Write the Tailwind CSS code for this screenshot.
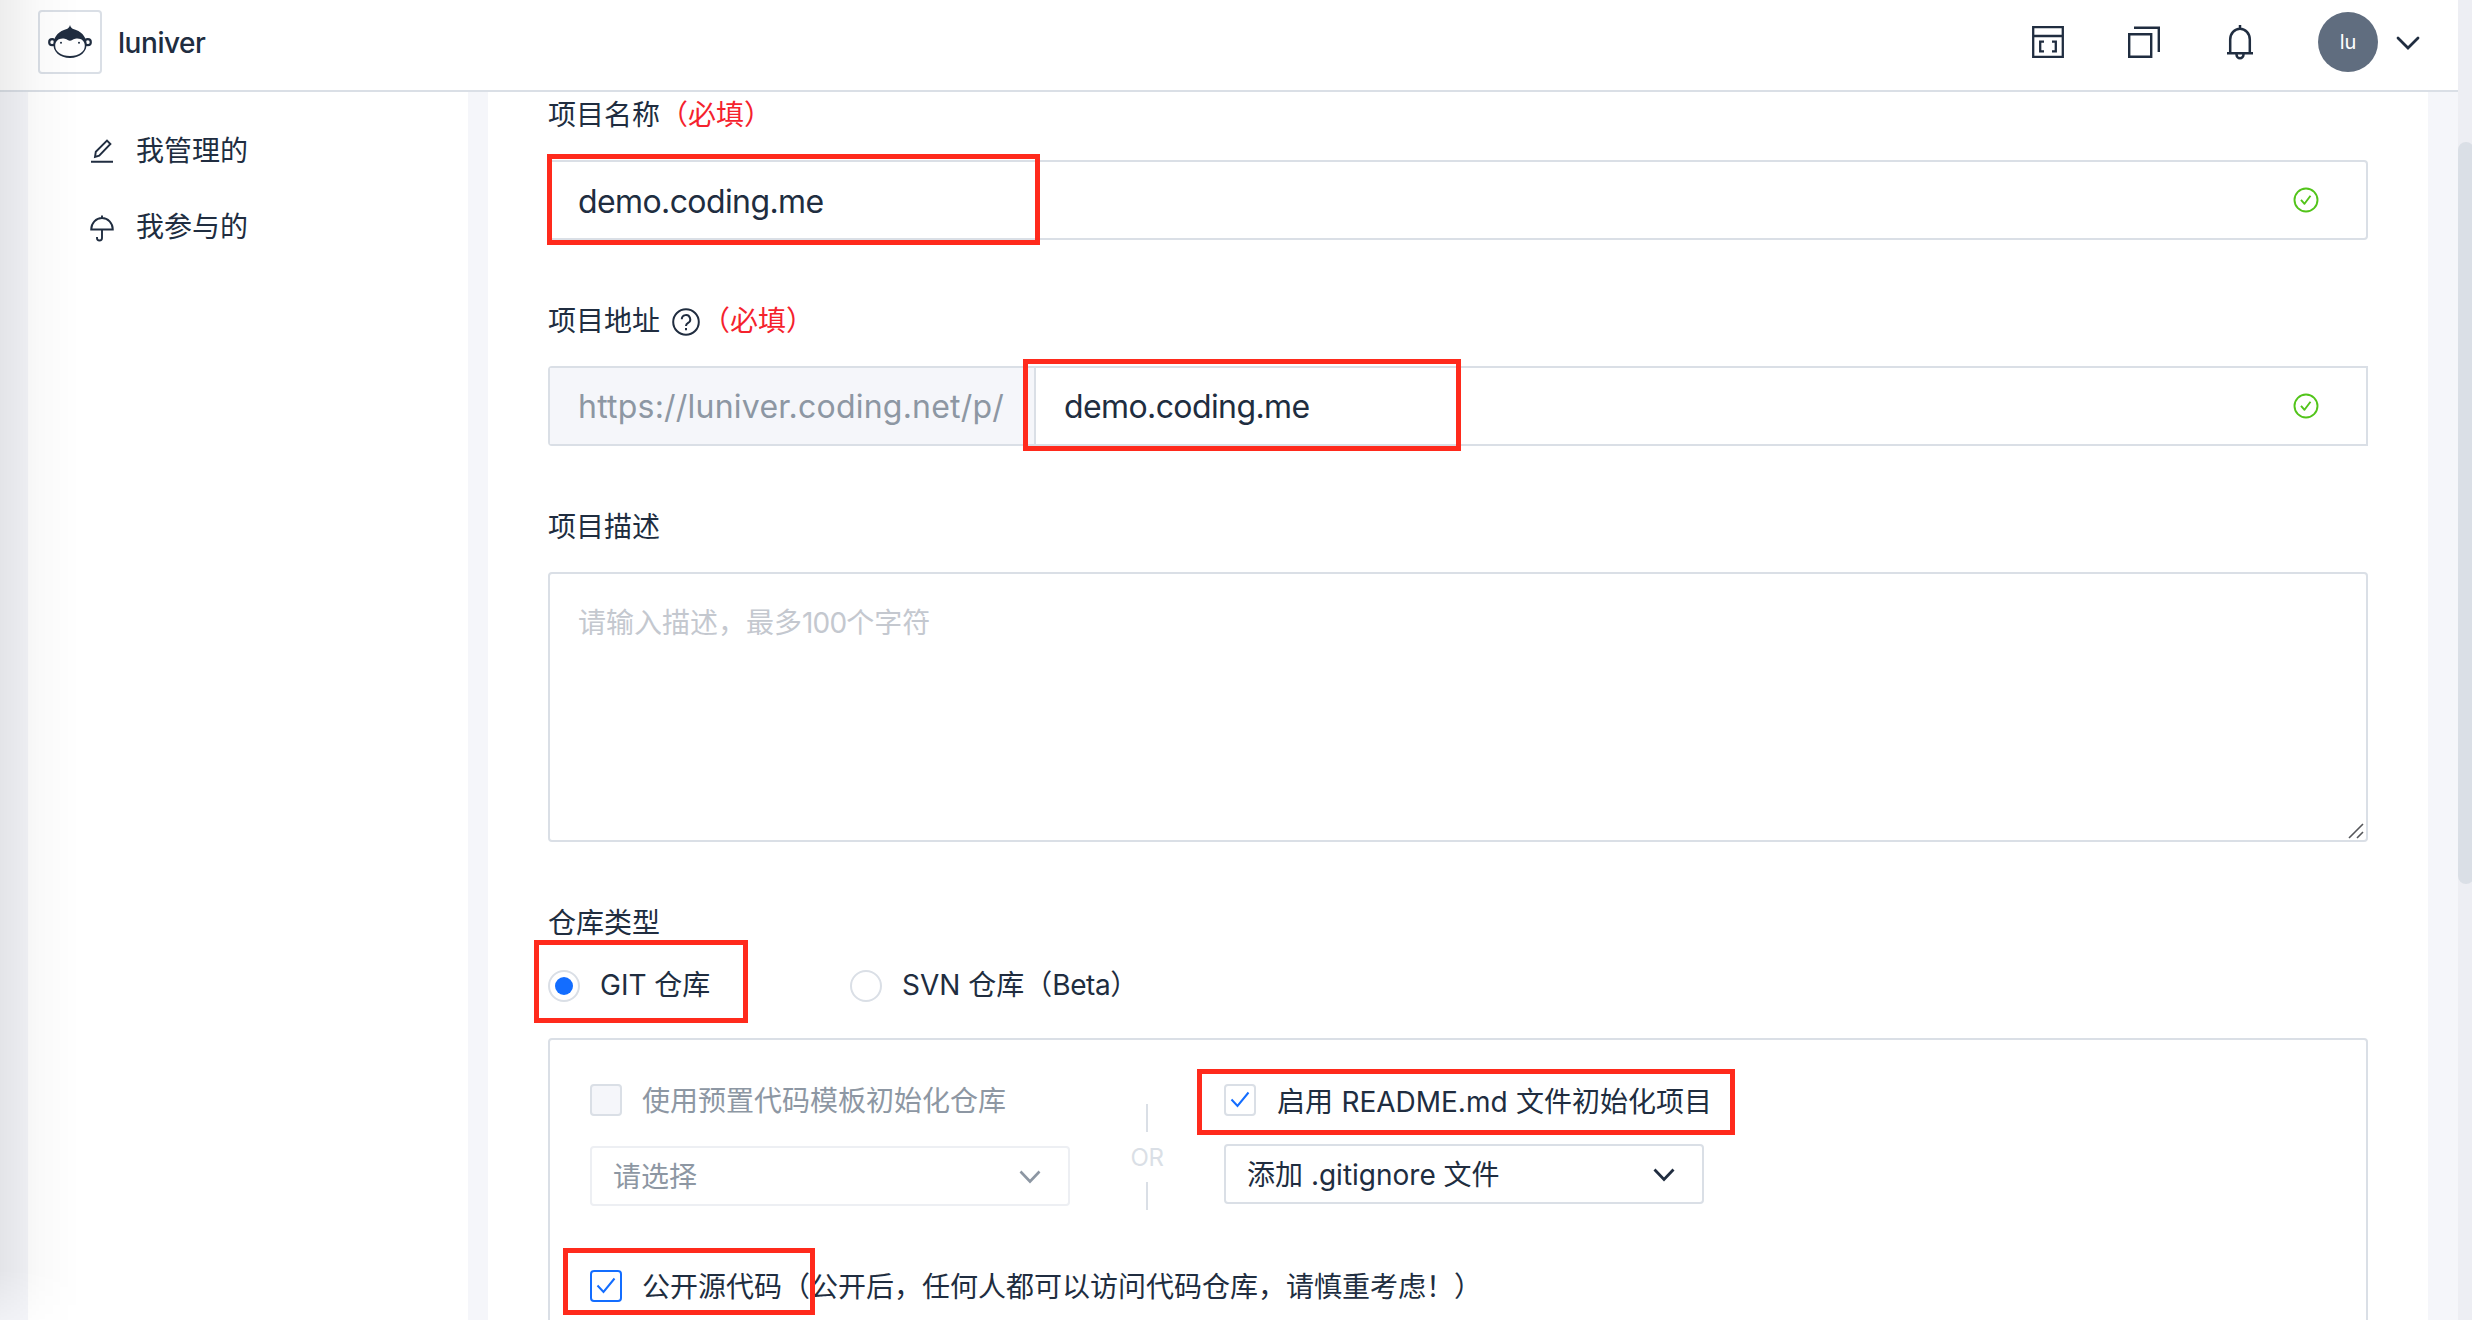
<!DOCTYPE html>
<html lang="zh-CN">
<head>
<meta charset="utf-8">
<title>luniver</title>
<script src="https://cdn.jsdelivr.net/npm/@tailwindcss/browser@4"></script>
</head>
<body class="relative h-screen overflow-hidden bg-[#f5f6fa] font-['Inter','Noto_Sans_CJK_SC',sans-serif] text-[28px] leading-[44px] text-[#202d40]">
<div class="flex h-full">
  <div class="flex min-w-0 flex-1 flex-col">
    <header class="flex h-[92px] shrink-0 items-start border-b-2 border-[#dadfe6] bg-white pl-[38px] pr-[38px]">
      <div class="mt-[10px] flex size-16 items-center justify-center rounded border-2 border-[#dadfe6]">
        <svg class="h-[34px] w-[44px]" viewBox="0 0 44 34" fill="none">
          <circle cx="4.200" cy="17.200" r="3" stroke="#202d40" stroke-width="2.200"/>
          <circle cx="39.800" cy="17.200" r="3" stroke="#202d40" stroke-width="2.200"/>
          <path d="M22 0c.6 2.200 1.600 3.300 3.300 4C33 6 37.500 11 38.500 17.500c1.300 9-6.500 15.500-16.500 15.500S4.200 26.500 5.500 17.500C6.500 11 11 6 18.700 4c1.700-.7 2.700-1.800 3.300-4z" fill="#202d40"/>
          <path d="M22 15.800c1.600 0 2.600-1.400 5.200-2 5.300-1.100 9.600 1.700 9.600 7 0 6-5.800 10.200-14.800 10.200S7.200 26.800 7.200 20.800c0-5.300 4.300-8.100 9.600-7 2.600.6 3.600 2 5.200 2z" fill="#fff"/>
          <circle cx="13" cy="17.800" r="1" fill="#202d40"/><circle cx="31" cy="17.800" r="1" fill="#202d40"/>
        </svg>
      </div>
      <div class="ml-4 mt-[21px] font-medium tracking-[-0.45px]">luniver</div>
      <div class="ml-auto flex h-[84px] items-center">
        <svg class="h-[34px] w-[34px]" viewBox="0 0 34 34" fill="none" stroke="#202d40" stroke-width="2.300"><path d="M2.200 2.200h29.600v29.600H2.200zM2.200 11h29.600M13 16.700H9.200v9.600H13M21 16.700h3.800v9.600H21"/></svg>
        <svg class="ml-[62px] h-[34px] w-[34px]" viewBox="0 0 34 34" fill="none" stroke="#202d40" stroke-width="2.400"><path d="M2.200 9.200h22v22.600h-22zM7 2.700h24.800v24.300"/></svg>
        <svg class="ml-16 h-[36px] w-[30px]" viewBox="0 0 30 36" fill="none" stroke="#202d40" stroke-width="2.500"><path d="M5.200 28.500V15.500a9.800 10.800 0 0 1 19.600 0V28.500M2 29.200h26M15 5V1M11.500 30.500a3.500 3.800 0 0 0 7 0"/></svg>
        <div class="ml-[63px] flex size-[60px] items-center justify-center rounded-full bg-[#606d7f] text-xl text-white">lu</div>
        <svg class="ml-[18px] mt-0.5 h-[14px] w-[24px]" viewBox="0 0 24 14" fill="none" stroke="#202d40" stroke-width="2.800" stroke-linecap="round"><path d="M2 2l10 10L22 2"/></svg>
      </div>
    </header>
    <div class="flex min-h-0 flex-1 gap-5 pl-7 pr-[30px]">
      <nav class="flex w-[440px] shrink-0 flex-col gap-8 bg-white pl-[62px] pt-[37px]">
        <a class="flex items-center gap-[22px]">
          <svg class="h-[28px] w-[24px]" viewBox="0 0 24 28" fill="none" stroke="#202d40" stroke-width="1.900"><path d="M1 24.800h22M5 20l.8-5.200L17 3.600l3.400 3.400L9.200 18.700z"/></svg>
          <span>我管理的</span>
        </a>
        <a class="flex items-center gap-[22px]">
          <svg class="mt-0.5 h-[28px] w-[24px]" viewBox="0 0 24 28" fill="none" stroke="#202d40" stroke-width="1.900"><path d="M1.200 15.500a10.800 11.500 0 0 1 21.600 0zM12 4V1.500M12 15.500v8.500a2.500 2.500 0 0 1-5 0v-1"/></svg>
          <span>我参与的</span>
        </a>
      </nav>
      <main class="min-w-0 flex-1 overflow-hidden bg-white px-[60px]">
        <div class="h-11 pt-px">项目名称<span class="text-[#f5222d]">（必填）</span></div>
        <div class="mt-6 flex h-20 items-center rounded border-2 border-[#dadfe6] pl-7 pr-[47px] text-[32px]">
          <span class="mt-[3px] tracking-[-0.6px]">demo.coding.me</span>
          <svg class="ml-auto size-[26px]" viewBox="0 0 26 26" fill="none" stroke="#52c41a" stroke-width="1.900"><circle cx="13" cy="13" r="11.500"/><path d="M8 12.800l3.500 4 6-8" stroke-linejoin="round"/></svg>
        </div>

        <div class="mt-[58px] flex h-11 items-center pt-0.5">项目地址
          <svg class="ml-3 mr-0.5 mt-0.5 size-[28px]" viewBox="0 0 28 28" fill="none" stroke="#202d40" stroke-width="2"><circle cx="14" cy="14" r="12.800"/><path d="M9.800 11.300a4.200 4.200 0 1 1 6.300 3.600c-1.400.8-2.100 1.500-2.100 3.200M14 20v2.300"/></svg>
          <span class="text-[#f5222d]">（必填）</span>
        </div>
        <div class="mt-6 flex h-20 items-stretch rounded-l border-2 border-[#dadfe6] text-[32px] leading-[78px]">
          <div class="h-[76px] w-[486px] shrink-0 whitespace-nowrap border-r-2 border-[#dadfe6] bg-[#f5f6fa] pl-7 text-[#8d97a3]"><span class="tracking-[0.22px]">https://luniver.coding.net/p/</span></div>
          <div class="flex h-[76px] flex-1 items-center pl-7 pr-[47px]">
            <span class="mt-0.5 tracking-[-0.6px]">demo.coding.me</span>
            <svg class="ml-auto size-[26px]" viewBox="0 0 26 26" fill="none" stroke="#52c41a" stroke-width="1.900"><circle cx="13" cy="13" r="11.500"/><path d="M8 12.800l3.500 4 6-8" stroke-linejoin="round"/></svg>
          </div>
        </div>

        <div class="mt-[58px] h-11 pt-px">项目描述</div>
        <div class="mt-6 flex h-[270px] justify-between rounded border-2 border-[#dadfe6] pl-7 pt-[27px] text-[#c4c8cf]">
          <span>请输入描述，最多<span class="tracking-[-0.8px]">100</span>个字符</span>
          <svg class="mb-px mr-0.5 size-[16px] self-end" viewBox="0 0 16 16" stroke="#55565a" stroke-width="1.600"><path d="M1 15L15 1M9 15l6-6"/></svg>
        </div>

        <div class="mt-[58px] h-11 pt-px">仓库类型</div>
        <div class="mt-[26px] flex h-8 items-center">
          <div class="flex w-[302px] items-center gap-5">
            <span class="flex size-8 items-center justify-center rounded-full border-2 border-[#dadfe6]"><span class="size-[18px] rounded-full bg-[#136dff]"></span></span>
            <span class="-mt-[3px]">GIT 仓库</span>
          </div>
          <div class="flex items-center gap-5">
            <span class="size-8 rounded-full border-2 border-[#dadfe6]"></span>
            <span class="-mt-[3px]">SVN 仓库（<span class="tracking-[-0.4px]">Beta</span>）</span>
          </div>
        </div>

        <div class="mt-9 h-[400px] rounded border-2 border-[#dadfe6] pl-10 pt-11">
          <div class="flex">
            <div class="w-[480px]">
              <div class="flex h-8 items-center gap-5 text-[#8d97a3]">
                <span class="size-8 rounded border-2 border-[#dadfe6] bg-[#f5f6fa]"></span>
                <span class="mt-0.5">使用预置代码模板初始化仓库</span>
              </div>
              <div class="mt-[30px] flex h-[60px] items-center justify-between rounded border-2 border-[#edeff3] pl-[21px] pr-[27px] text-[#8d97a3]">
                <span class="mt-0.5">请选择</span>
                <svg class="mt-0.5 h-[14px] w-[22px]" viewBox="0 0 22 14" fill="none" stroke="#8d97a3" stroke-width="2.600"><path d="M1.500 1.500L11 11.500l9.500-10"/></svg>
              </div>
            </div>
            <div class="flex w-[154px] flex-col items-center pt-5 text-2xl leading-[50px] text-[#dadfe6]">
              <span class="h-7 w-0.5 bg-[#dadfe6]"></span>
              <span class="h-[50px] pt-px tracking-[-0.5px]">OR</span>
              <span class="h-7 w-0.5 bg-[#dadfe6]"></span>
            </div>
            <div class="w-[480px]">
              <div class="flex h-8 items-center gap-[21px]">
                <span class="flex size-8 shrink-0 items-center justify-center rounded border-2 border-[#dadfe6]"><svg class="size-5" viewBox="0 0 20 20" fill="none" stroke="#136dff" stroke-width="2"><path d="M1.500 9.500l6 6.500L18.500 2.500"/></svg></span>
                <span class="mt-1 whitespace-nowrap [word-spacing:0.5px]">启用 README.md 文件初始化项目</span>
              </div>
              <div class="mt-7 flex h-[60px] items-center justify-between rounded border-2 border-[#dadfe6] pl-[21px] pr-[27px]">
                <span class="mt-0.5">添加 .gitignore 文件</span>
                <svg class="mt-0.5 h-[14px] w-[22px]" viewBox="0 0 22 14" fill="none" stroke="#202d40" stroke-width="2.800"><path d="M1.500 1.500L11 11.500l9.500-10"/></svg>
              </div>
            </div>
          </div>
          <div class="mt-[60px] flex h-8 items-center gap-5">
            <span class="flex size-8 items-center justify-center rounded border-2 border-[#136dff]"><svg class="size-5" viewBox="0 0 20 20" fill="none" stroke="#136dff" stroke-width="2"><path d="M1.500 9.500l6 6.500L18.500 2.500"/></svg></span>
            <span class="mt-0.5">公开源代码（公开后，任何人都可以访问代码仓库，请慎重考虑！）</span>
          </div>
        </div>
      </main>
    </div>
  </div>
  <div class="w-[14px] shrink-0 overflow-hidden bg-[#edeef3] pt-[142px]">
    <div class="h-[742px] w-4 rounded-full bg-[#dadfe6]"></div>
  </div>
</div>

<!-- window edge shade -->
<div class="pointer-events-none absolute inset-y-0 left-0 w-20 bg-linear-to-r from-black/7 via-black/2 to-transparent mask-b-from-[1270px] mask-b-to-[1340px]"></div>

<!-- highlight frames -->
<div class="absolute left-[547px] top-[154px] h-[91px] w-[493px] border-5 border-[#ff2a1c]"></div>
<div class="absolute left-[1023px] top-[359px] h-[92px] w-[438px] border-5 border-[#ff2a1c]"></div>
<div class="absolute left-[534px] top-[940px] h-[83px] w-[214px] border-5 border-[#ff2a1c]"></div>
<div class="absolute left-[1197px] top-[1069px] h-[66px] w-[538px] border-5 border-[#ff2a1c]"></div>
<div class="absolute left-[563px] top-[1248px] h-[67px] w-[252px] border-5 border-[#ff2a1c]"></div>
</body>
</html>
